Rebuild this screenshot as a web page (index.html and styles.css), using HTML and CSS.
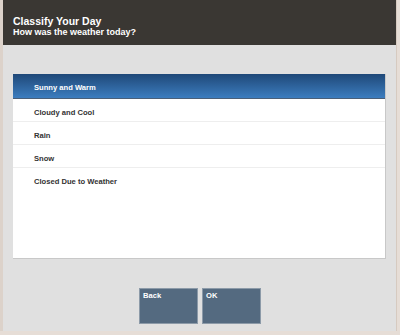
FILE: index.html
```html
<!DOCTYPE html>
<html>
<head>
<meta charset="utf-8">
<link rel="stylesheet" href="styles.css">
</head>
<body>
<div class="frame">
  <div class="header">
    <div class="title">Classify Your Day</div>
    <div class="subtitle">How was the weather today?</div>
  </div>
  <div class="content">
    <div class="list">
      <div class="row selected">Sunny and Warm</div>
      <div class="row">Cloudy and Cool</div>
      <div class="row">Rain</div>
      <div class="row">Snow</div>
      <div class="row last">Closed Due to Weather</div>
    </div>
    <div class="buttons">
      <div class="btn">Back</div>
      <div class="btn">OK</div>
    </div>
  </div>
</div>
</body>
</html>
```
FILE: styles.css
```css
html, body {
  margin: 0;
  padding: 0;
}
body {
  width: 400px;
  height: 335px;
  background: #e6ddd6;
  font-family: "Liberation Sans", Arial, sans-serif;
}
.frame {
  width: 397px;
  height: 331px;
  display: flex;
  flex-direction: column;
  background: #e0e0e0;
  border-left: 3px solid #dcd2ca;
  box-sizing: border-box;
  border-right: 1px solid #d6cac0;
}
.header {
  height: 45px;
  background: #3a3733;
  color: #fff;
  padding: 16px 0 0 10px;
  box-sizing: border-box;
  font-weight: bold;
}
.title {
  font-size: 10.5px;
  line-height: 11px;
}
.subtitle {
  font-size: 9px;
  line-height: 10px;
}
.content {
  flex: 1;
  padding: 29px 0 0 10px;
  display: flex;
  flex-direction: column;
}
.list {
  width: 373px;
  height: 185px;
  background: #fff;
  border-right: 1px solid #c8c8c8;
  border-bottom: 1px solid #c8c8c8;
  box-sizing: border-box;
}
.row {
  height: 22px;
  line-height: 27px;
  padding-left: 21px;
  font-size: 7.6px;
  font-weight: bold;
  color: #333;
  border-bottom: 1px solid #eeeeee;
}
.row.last {
  border-bottom: none;
}
.row.selected {
  height: 24px;
  line-height: 27px;
  color: #fff;
  background: linear-gradient(#1f4878, #3c7dbf);
  border-bottom: 1px solid #4a5f78;
}
.buttons {
  display: flex;
  gap: 4px;
  padding: 29px 0 0 126px;
}
.btn {
  width: 59px;
  height: 36px;
  background: #546a80;
  border: 1px solid #8c9aa8;
  box-sizing: border-box;
  color: #fff;
  font-size: 7.6px;
  line-height: 9px;
  font-weight: bold;
  padding: 2px 0 0 3px;
}
```
